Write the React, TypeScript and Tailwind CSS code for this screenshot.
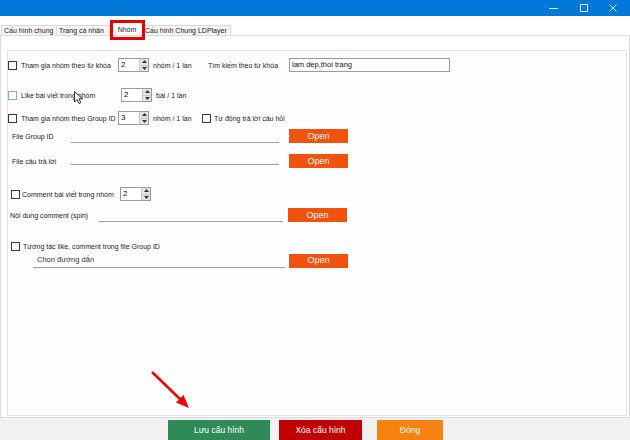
import React from "react";

function Check({ blue = false }: { blue?: boolean }) {
  return (
    <span
      className={
        "block h-[9px] w-[9px] shrink-0 border bg-white " +
        (blue ? "border-[#6fb0e8]" : "border-[#3a3a3a]")
      }
    />
  );
}

function Spin({ value }: { value: string }) {
  return (
    <div className="flex h-[14px] w-[31px] shrink-0 border border-[#9a9a9a] bg-white">
      <span className="flex-1 pl-[2px] text-[8px] leading-[12px] text-[#111]">{value}</span>
      <div className="flex w-[9px] flex-col border-l border-[#c8c8c8]">
        <div className="flex flex-1 items-center justify-center bg-[#e4e4e4]">
          <svg width="5" height="3" viewBox="0 0 5 3">
            <path d="M0 3 L2.5 0 L5 3 Z" fill="#333" />
          </svg>
        </div>
        <div className="h-px bg-[#c8c8c8]" />
        <div className="flex flex-1 items-center justify-center bg-[#e4e4e4]">
          <svg width="5" height="3" viewBox="0 0 5 3">
            <path d="M0 0 L2.5 3 L5 0 Z" fill="#333" />
          </svg>
        </div>
      </div>
    </div>
  );
}

function OpenBtn({ className = "" }: { className?: string }) {
  return (
    <button
      className={
        "flex h-[14px] w-[59px] shrink-0 items-center justify-center bg-[#f1520d] text-[9px] leading-none text-white " +
        className
      }
    >
      Open
    </button>
  );
}

function TitleBar() {
  return (
    <div className="flex h-[16px] items-center justify-end bg-[#0078d7] pr-[13px]">
      <svg width="9" height="9" viewBox="0 0 9 9" className="mr-[22px]">
        <path d="M0 4.5 H9" stroke="#dbe9f7" strokeWidth="1" />
      </svg>
      <svg width="8" height="8" viewBox="0 0 8 8" className="mr-[21px]">
        <rect x="0.5" y="0.5" width="7" height="7" fill="none" stroke="#dbe9f7" strokeWidth="1" />
      </svg>
      <svg width="8" height="8" viewBox="0 0 8 8">
        <path d="M0.5 0.5 L7.5 7.5 M7.5 0.5 L0.5 7.5" stroke="#dbe9f7" strokeWidth="1" />
      </svg>
    </div>
  );
}

function Tabs() {
  const tab =
    "flex h-[10px] items-center overflow-hidden whitespace-nowrap border border-b-0 border-[#d9d9d9] bg-[#f5f5f5] px-[2px] text-[7px] leading-none text-[#222]";
  return (
    <div className="flex h-[19px] items-end pl-[1px]">
      <div className={tab + " w-[56px]"}>Cấu hình chung</div>
      <div className={tab + " w-[53px] border-l-0"}>Trang cá nhân</div>
      <div className="flex h-[13px] w-[34px] items-center justify-center border border-b-0 border-[#d9d9d9] bg-white text-[7px] leading-none text-[#222]">
        Nhóm
      </div>
      <div className={tab + " w-[87px] border-l-0 !px-[1px]"}>Cấu hình Chung LDPlayer</div>
    </div>
  );
}

function GroupTab() {
  const label = "shrink-0 text-[7px] leading-none text-[#222] whitespace-nowrap";
  return (
    <div className="flex h-[382px] flex-col border-t border-r border-l border-[#dcdcdc] bg-white pt-[14px] pr-[2px] pl-[6px] pb-[1px]">
      <div className="flex flex-1 flex-col border border-[#e3e3e3] bg-[#fefefe]">
        {/* row 1 */}
        <div className="mt-[7px] flex h-[14px] items-center">
          <Check />
          <span className={label + " ml-[4px] w-[97px]"}>Tham gia nhóm theo từ khóa</span>
          <Spin value="2" />
          <span className={label + " ml-[4px] w-[55px]"}>nhóm / 1 lần</span>
          <span className={label + " w-[81px]"}>Tìm kiếm theo từ khóa</span>
          <div className="flex h-[14px] w-[161px] items-center border border-[#9a9a9a] bg-white pl-[2px] text-[7.5px] leading-none text-[#111]">
            lam dep,thoi trang
          </div>
        </div>
        {/* row 2 */}
        <div className="mt-[16px] flex h-[14px] items-center">
          <Check blue />
          <span className={label + " ml-[4px] w-[100px]"}>Like bài viết trong nhóm</span>
          <Spin value="2" />
          <span className={label + " ml-[4px]"}>bài / 1 lần</span>
        </div>
        {/* row 3 */}
        <div className="mt-[9px] flex h-[14px] items-center">
          <Check />
          <span className={label + " ml-[4px] w-[97px]"}>Tham gia nhóm theo Group ID</span>
          <Spin value="3" />
          <span className={label + " ml-[4px] w-[49px]"}>nhóm / 1 lần</span>
          <Check />
          <span className={label + " ml-[3px]"}>Tự động trả lời câu hỏi</span>
        </div>
        {/* row 4 */}
        <div className="mt-[4px] flex h-[14px] items-center">
          <span className={label + " ml-[4px] w-[59px]"}>File Group ID</span>
          <div className="h-[14px] w-[208px] border-b border-[#a0a0a0]" />
          <OpenBtn className="ml-[10px]" />
        </div>
        {/* row 5 */}
        <div className="mt-[11px] flex h-[14px] items-center">
          <span className={label + " ml-[4px] w-[59px]"}>File câu trả lời</span>
          <div className="mb-[3px] h-[11px] w-[208px] self-start border-b border-[#a0a0a0]" />
          <OpenBtn className="ml-[10px]" />
        </div>
        {/* row 6 */}
        <div className="mt-[19px] flex h-[14px] items-center">
          <span className="ml-[3px]">
            <Check />
          </span>
          <span className={label + " ml-[2px] w-[98px]"}>Comment bài viết trong nhóm</span>
          <Spin value="2" />
        </div>
        {/* row 7 */}
        <div className="mt-[7px] flex h-[14px] items-center">
          <span className={label + " ml-[2px] w-[89px]"}>Nội dung comment (spin)</span>
          <div className="h-[14px] w-[184px] border-b border-[#a0a0a0]" />
          <OpenBtn className="ml-[5px]" />
        </div>
        {/* row 8 */}
        <div className="mt-[18px] flex h-[12px] items-center">
          <span className="ml-[3px]">
            <Check />
          </span>
          <span className={label + " ml-[3px]"}>Tương tác like, comment trong file Group ID</span>
        </div>
        {/* row 9 */}
        <div className="mt-[1px] flex h-[15px] items-center">
          <div className="ml-[25px] flex h-[15px] w-[252px] items-center border-b border-[#a0a0a0] pl-[4px]">
            <span className="text-[7.5px] leading-none text-[#333]">Chọn đường dẫn</span>
          </div>
          <OpenBtn className="ml-[4px]" />
        </div>
      </div>
    </div>
  );
}

function Footer() {
  const btn = "flex h-[20px] items-center justify-center text-[8.5px] leading-none text-white";
  return (
    <div className="flex h-[23px] items-start border-t border-[#dcdcdc] bg-[#f1f1f1] pt-[2px] pl-[168px]">
      <button className={btn + " w-[102px] bg-[#2e8b57]"}>Lưu cấu hình</button>
      <button className={btn + " ml-[9px] w-[83px] bg-[#c00000]"}>Xóa cấu hình</button>
      <button className={btn + " ml-[15px] w-[66px] bg-[#f7820f]"}>Đóng</button>
    </div>
  );
}

export default function App() {
  return (
    <div className="relative h-[440px] w-[630px] overflow-hidden bg-white font-['Liberation_Sans',Arial,sans-serif]">
      <TitleBar />
      <Tabs />
      <GroupTab />
      <Footer />

      {/* annotation: red box around selected tab */}
      <div className="absolute top-[20px] left-[110px] h-[20px] w-[35px] border-[3px] border-[#e60000]" />

      {/* annotation: red arrow */}
      <svg className="pointer-events-none absolute top-0 left-0" width="630" height="440">
        <line x1="152" y1="372" x2="181" y2="400" stroke="#f00000" strokeWidth="2.5" />
        <polygon points="189,408 176,402.5 183.5,395" fill="#f00000" />
      </svg>

      {/* mouse cursor */}
      <svg className="pointer-events-none absolute top-[91px] left-[74px]" width="10" height="14" viewBox="0 0 10 14">
        <path d="M0.5 0.5 L0.5 11 L3 8.5 L5 12.5 L6.8 11.7 L5 7.8 L8.5 7.8 Z" fill="#fff" stroke="#000" strokeWidth="0.8" />
      </svg>
    </div>
  );
}
